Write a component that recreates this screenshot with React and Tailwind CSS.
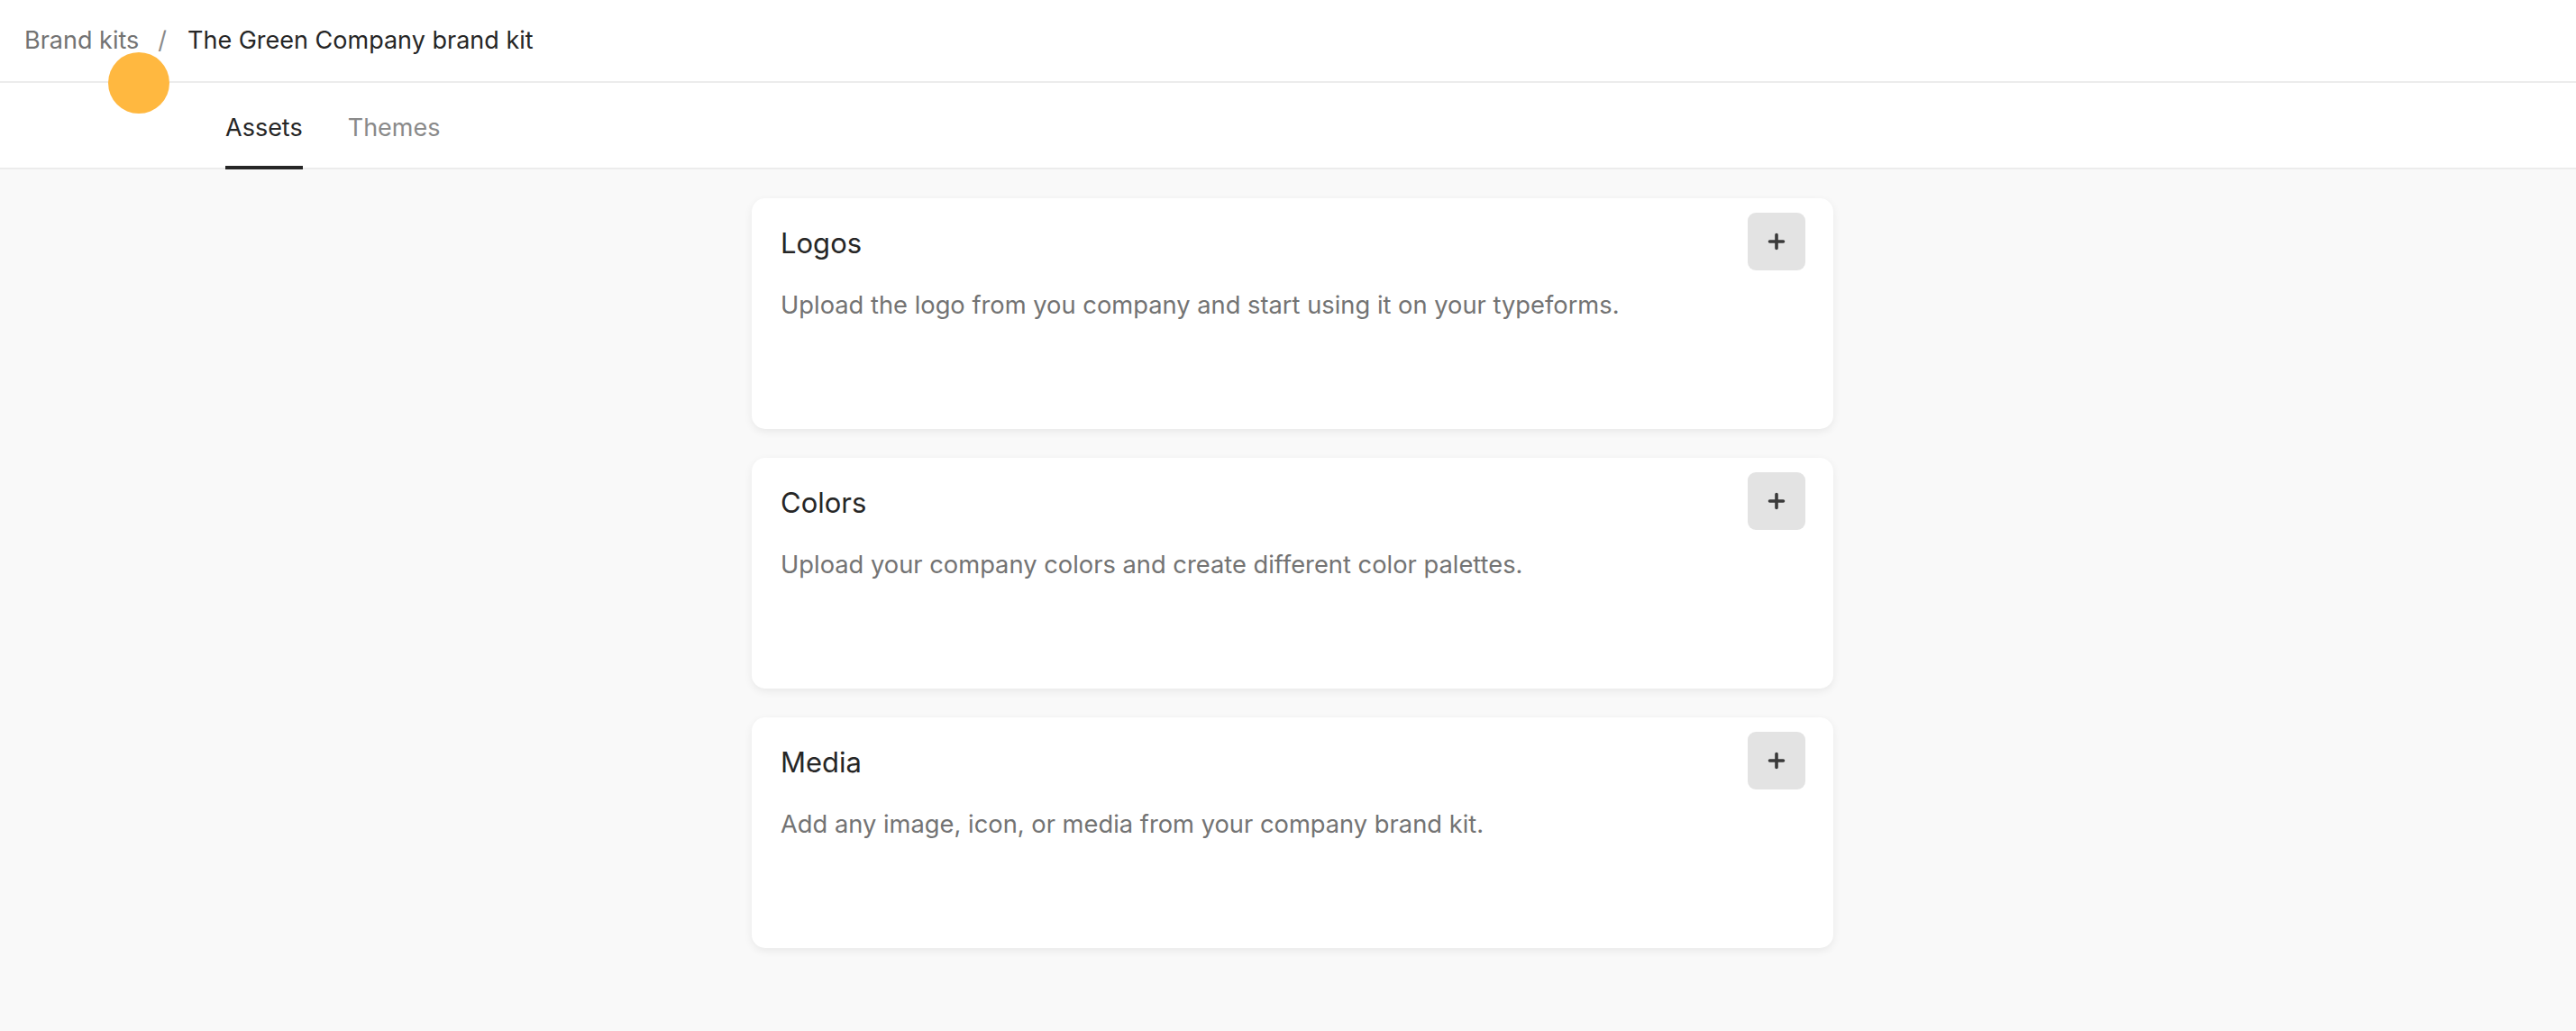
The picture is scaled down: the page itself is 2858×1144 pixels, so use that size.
import React, { useState } from "react";

const sections = [
  {
    title: "Logos",
    text: "Upload the logo from you company and start using it on your typeforms.",
  },
  {
    title: "Colors",
    text: "Upload your company colors and create different color palettes.",
  },
  {
    title: "Media",
    text: "Add any image, icon, or media from your company brand kit.",
  },
];

function PlusIcon() {
  return (
    <svg width="20" height="20" viewBox="0 0 20 20" fill="none">
      <path d="M10 2.5v15M2.5 10h15" stroke="#3a3a3a" strokeWidth="3.6" strokeLinecap="round" />
    </svg>
  );
}

function AssetCard({ title, text }) {
  return (
    <div className="bg-white rounded-[15px] h-[256px] px-8 pt-4 shadow-[0_3px_10px_rgba(0,0,0,0.07)]">
      <div className="flex items-center justify-between h-16">
        <h3 className="text-[31px] leading-[40px] text-[#262626] pt-[4px]">{title}</h3>
        <button className="w-16 h-16 rounded-[9px] bg-[#e3e3e3] flex items-center justify-center -mr-px">
          <PlusIcon />
        </button>
      </div>
      <p className="mt-[19px] text-[27.3px] leading-[40px] text-[#737373]">{text}</p>
    </div>
  );
}

export default function App() {
  const [tab, setTab] = useState("Assets");

  return (
    <div className="min-h-screen bg-[#f9f9f9] relative font-['Inter',sans-serif]">
      {/* Breadcrumb */}
      <div className="h-[92px] bg-white border-b-2 border-[#ececec] flex items-center pl-[27px] text-[27px] leading-[40px]">
        <span className="text-[#737373]">Brand kits</span>
        <span className="text-[#8a8a8a] ml-[21px] mr-[23px]">/</span>
        <span className="text-[#262626]">The Green Company brand kit</span>
      </div>

      {/* Tabs */}
      <div className="h-[96px] bg-white border-b-2 border-[#ececec] flex items-end pl-[250px] gap-[50px]">
        {["Assets", "Themes"].map((t) => (
          <button
            key={t}
            onClick={() => setTab(t)}
            className={
              "text-[27px] leading-[40px] pb-[22px] -mb-[2px] border-b-4 " +
              (tab === t ? "text-[#262626] border-[#262626]" : "text-[#8a8a8a] border-transparent")
            }
          >
            {t}
          </button>
        ))}
      </div>

      {/* Cards */}
      <div className="w-[1200px] mx-auto translate-x-[5px] pt-[32px] pb-[92px] flex flex-col gap-8">
        {sections.map((s) => (
          <AssetCard key={s.title} title={s.title} text={s.text} />
        ))}
      </div>

      {/* pointer marker */}
      <div className="absolute left-[120px] top-[58px] w-[68px] h-[68px] rounded-full bg-[#ffb840]" />
    </div>
  );
}
